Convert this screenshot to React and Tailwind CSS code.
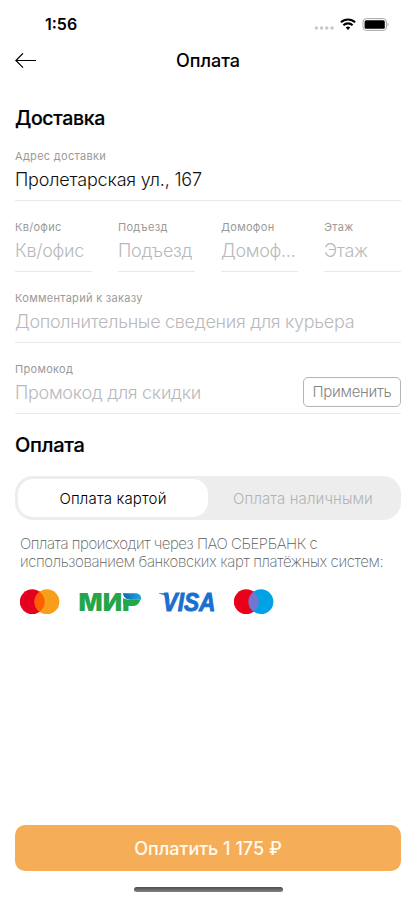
import React, { useState } from "react";

const StatusBar = () => {
  return (
    <div className="flex h-12 items-center justify-between pl-[45px] pr-[27px]">
      <span className="text-[16px] leading-5 font-semibold">1:56</span>
      <div className="flex items-center gap-[6px]">
        <svg width="20" height="13" viewBox="0 0 20 13" fill="#c9c9cb">
          <circle cx="2.4" cy="10" r="1.8" />
          <circle cx="7.6" cy="10" r="1.8" />
          <circle cx="12.8" cy="10" r="1.8" />
          <circle cx="18" cy="10" r="1.8" />
        </svg>
        <svg width="16" height="12" viewBox="0 0 16 12" fill="none" stroke="#000" strokeWidth="2.1">
          <path d="M0.9 4.300a10.300 10.300 0 0 1 14.200 0" />
          <path d="M3.4 7.200a6.600 6.600 0 0 1 9.200 0" />
          <path d="M8 11.900 5.700 9.600a3.300 3.300 0 0 1 4.600 0z" fill="#000" stroke="none" />
        </svg>
        <svg width="27" height="13" viewBox="0 0 27 13">
          <rect x="1" y="0.6" width="23.4" height="11.8" rx="3.4" fill="none" stroke="#a6a6a6" />
          <rect x="2.6" y="2.2" width="20.2" height="8.6" rx="1.6" fill="#000" />
          <path d="M25.500 4.700c1.300.6 1.300 3 0 3.600z" fill="#a6a6a6" />
        </svg>
      </div>
    </div>
  );
};

const Field = ({ label, value, placeholder, className = "", children }) => {
  return (
    <div className={`flex h-[71px] flex-col border-b border-[#e9e9e9] pt-[18px] ${className}`}>
      <span className="text-[11px] leading-4 tracking-[0.3px] text-[#9a9a9a]">{label}</span>
      <div className="mt-px flex h-[30px] items-center justify-between">
        <span
          className={`truncate text-[18px] leading-[30px] font-light ${
            value ? "tracking-[-0.2px] text-[#111]" : "tracking-[-0.3px] text-[#b9b9bc]"
          }`}
        >
          {value || placeholder}
        </span>
        {children}
      </div>
    </div>
  );
};

const Mastercard = () => (
  <svg width="40" height="26" viewBox="0 0 40 26">
    <circle cx="12.2" cy="12.7" r="12.4" fill="#e6001f" />
    <circle cx="27" cy="12.7" r="12.4" fill="#f79e1b" />
    <path d="M19.6 2.700a12.4 12.4 0 0 1 0 20a12.4 12.4 0 0 1 0-20z" fill="#ff5f00" />
  </svg>
);

const Mir = () => (
  <svg
    width="65"
    height="36"
    viewBox="0 -5 65 36"
    fontFamily="Inter, sans-serif"
    fontWeight="900"
    fontSize="24"
    fill="#25a54a"
  >
    <defs>
      <linearGradient id="mir" x1="0" x2="1">
        <stop offset="0" stopColor="#0f66b0" />
        <stop offset="1" stopColor="#1ea7df" />
      </linearGradient>
    </defs>
    <text y="22">
      <tspan x="0.6" textLength="43.5" lengthAdjust="spacingAndGlyphs">МИ</tspan>
      <tspan x="44.1" textLength="17" lengthAdjust="spacingAndGlyphs">Р</tspan>
    </text>
    {/* lower half of the bowl and the blue wing on top of it */}
    <path d="M45.200 10H62.200c-.4 4.300-3 6.900-6.800 6.900H50.500V15h-5.300z" />
    <path d="M44 3.500h14c4 0 6 2.700 5.200 7.300H52c-3 0-5.200-.6-6.700-1.800L44 8z" fill="#fff" />
    <path d="M44.900 4.300h12.200c4 0 6.600 2.300 5.900 6.500H52.200c-4.200 0-6.700-2.900-7.300-6.500z" fill="url(#mir)" />
  </svg>
);

const Visa = () => (
  <svg width="68" height="44" viewBox="-2 -9 68 44" fill="#1a6fce">
    <path d="M0 4.200h7.200c1.400 0 2 .6 2.300 2l1.300 6.500C9.500 8.500 6 5.800 0 4.800z" />
    <text
      x="3.500"
      y="21.800"
      fontFamily="Liberation Sans, sans-serif"
      fontWeight="700"
      fontStyle="italic"
      fontSize="25"
      stroke="#1a6fce"
      strokeWidth="0.9"
      textLength="53"
      lengthAdjust="spacingAndGlyphs"
    >
      VISA
    </text>
  </svg>
);

const Maestro = () => (
  <svg width="40" height="26" viewBox="0 0 40 26">
    <circle cx="12.2" cy="12.7" r="12.4" fill="#eb001b" />
    <circle cx="27" cy="12.7" r="12.4" fill="#00a2e5" />
    <path d="M19.6 2.700a12.4 12.4 0 0 1 0 20a12.4 12.4 0 0 1 0-20z" fill="#7375cf" />
  </svg>
);

const App = () => {
  const [method, setMethod] = useState("card");

  const tabClass = (name) =>
    method === name ? "bg-white text-black" : "text-[#b4b4b4]";

  return (
    <div className="flex h-[900px] w-[416px] flex-col bg-white font-['Inter',sans-serif] text-black">
      <StatusBar />

      <header className="grid h-[26px] grid-cols-[1fr_auto_1fr] items-center px-[15px]">
        <svg width="22" height="16" viewBox="0 0 22 16" fill="none" stroke="#000" strokeWidth="1.2">
          <path d="M21 7.500H1M8 0.300 0.900 7.500 8 14.700" />
        </svg>
        <h1 className="text-[18px] leading-6 font-medium">Оплата</h1>
      </header>

      <main className="flex flex-1 flex-col px-[15px] pt-8">
        <h2 className="text-[19.5px] leading-6 font-medium tracking-[-0.35px] [-webkit-text-stroke:0.2px_#000]">Доставка</h2>
        <Field label="Адрес доставки" value="Пролетарская ул., 167" />
        <div className="flex gap-[26px]">
          <Field className="w-[77px]" label="Кв/офис" placeholder="Кв/офис" />
          <Field className="w-[77px]" label="Подъезд" placeholder="Подъезд" />
          {/* the placeholder does not fit this column, so it is shortened */}
          <Field className="w-[77px]" label="Домофон" placeholder="Домоф..." />
          <Field className="w-[77px]" label="Этаж" placeholder="Этаж" />
        </div>
        <Field label="Комментарий к заказу" placeholder="Дополнительные сведения для курьера" />
        <Field label="Промокод" placeholder="Промокод для скидки">
          <button className="mb-[2px] h-[30px] w-[98px] rounded-[5px] border border-[#b4b4b4] text-[15px] font-light tracking-[-0.3px] text-[#858585]">
            Применить
          </button>
        </Field>

        <h2 className="mt-[19px] text-[20px] leading-[25px] font-medium tracking-[-0.25px] [-webkit-text-stroke:0.2px_#000]">Оплата</h2>
        <div className="mt-[18px] flex h-11 rounded-[18px] bg-[#ededed] p-[3px] text-[15px]">
          <button
            onClick={() => setMethod("card")}
            className={`w-[190px] rounded-[15px] pt-[2px] font-[350] tracking-[0.15px] ${tabClass("card")}`}
          >
            Оплата картой
          </button>
          <button
            onClick={() => setMethod("cash")}
            className={`w-[190px] rounded-[15px] pt-[2px] font-light tracking-[0.1px] ${tabClass("cash")}`}
          >
            Оплата наличными
          </button>
        </div>

        <p className="mt-[15px] pl-[5px] text-[15px] leading-[18px] font-extralight tracking-[-0.39px] whitespace-nowrap text-[#5c5c5c]">
          <span className="tracking-[-0.47px]">Оплата происходит через ПАО СБЕРБАНК с</span>
          <br />
          использованием банковских карт платёжных систем:
        </p>
        <div className="mt-[9px] flex items-center pl-[5px]">
          <Mastercard />
          <div className="ml-[18px]">
            <Mir />
          </div>
          <div className="ml-[14px]">
            <Visa />
          </div>
          <div className="ml-[9px]">
            <Maestro />
          </div>
        </div>

        <button className="mt-auto h-[46px] rounded-[10px] bg-[#f5ae57] text-[18px] font-[450] text-[#fffaf0]">
          Оплатить 1 175 ₽
        </button>
      </main>

      <footer className="flex h-[29px] justify-center pt-[16px]">
        <div className="h-[5px] w-[149px] rounded-full bg-linear-to-b from-[#4d4d4d] to-[#858585]" />
      </footer>
    </div>
  );
};

export default App;
